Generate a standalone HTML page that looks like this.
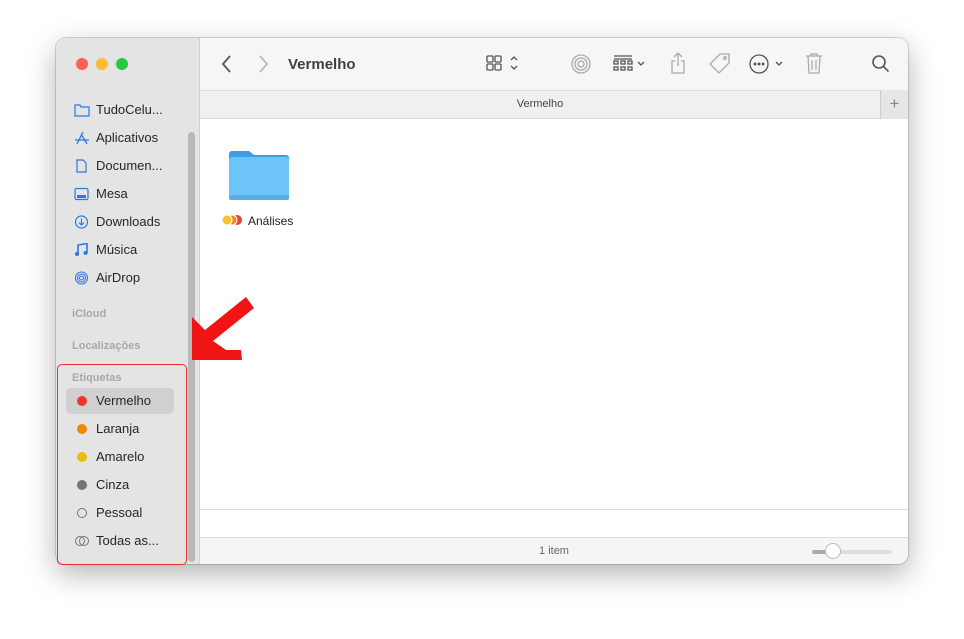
<!DOCTYPE html>
<html><head><meta charset="utf-8"><style>
*{margin:0;padding:0;box-sizing:border-box}
body{width:964px;height:639px;background:#fff;font-family:"Liberation Sans",sans-serif;position:relative;overflow:hidden}
.win{position:absolute;left:56px;top:38px;width:852px;height:526px;border-radius:10px;overflow:hidden;box-shadow:0 10px 30px rgba(0,0,0,.3),0 0 0 1px rgba(0,0,0,.15);background:#fff}
.side{position:absolute;left:0;top:0;width:144px;height:526px;background:#e4e4e4;border-right:1px solid #d0d0d0}
.tl{position:absolute;top:20px;width:12px;height:12px;border-radius:50%}
.it{position:absolute;left:16px;font-size:13px;color:#262626;height:20px;line-height:20px}
.it svg,.it .d{position:absolute;left:2px;top:3px}
.it span{position:absolute;left:24px;white-space:nowrap}
.hd{position:absolute;left:16px;font-size:11px;font-weight:bold;color:#a8a8a8}
.d{width:10px;height:10px;border-radius:50%;top:5px!important;left:5px!important}
.tb{position:absolute;left:144px;top:0;right:0;height:52px;background:#f6f6f6}
.tab{position:absolute;left:144px;top:52px;right:0;height:29px;background:#f0f0f0;border-top:1px solid #ddd;border-bottom:1px solid #ddd}
.ic{position:absolute;stroke:#8a8a8a;fill:none;stroke-width:1.3}
</style></head><body>
<div class="win">
<div class="side">
 <div class="tl" style="left:20px;background:#fe5f57"></div>
 <div class="tl" style="left:40px;background:#febc2e"></div>
 <div class="tl" style="left:60px;background:#28c840"></div>
 <div style="position:absolute;left:132px;top:94px;width:7px;height:430px;border-radius:4px;background:#b9b9b9"></div>
 <div class="it" style="top:62px"><svg width="16" height="14" viewBox="0 0 16 14"><path d="M1 2h5l1 2h8v9H1z" stroke="#2a7ae2" fill="none" stroke-width="1.2"/></svg><span>TudoCelu...</span></div>
 <div class="it" style="top:90px"><svg width="16" height="14" viewBox="0 0 16 14"><path d="M3 13L9 1M13 13L7 3M1 9h14" stroke="#2a7ae2" fill="none" stroke-width="1.3"/></svg><span>Aplicativos</span></div>
 <div class="it" style="top:118px"><svg width="16" height="14" viewBox="0 0 16 14"><path d="M3 1h6l3 3v9H3z" stroke="#2a7ae2" fill="none" stroke-width="1.2"/></svg><span>Documen...</span></div>
 <div class="it" style="top:146px"><svg width="16" height="14" viewBox="0 0 16 14"><rect x="1" y="1.5" width="13" height="11" rx="1.5" stroke="#2a7ae2" fill="none" stroke-width="1.2"/><rect x="3" y="8" width="9" height="3" fill="#2a7ae2"/></svg><span>Mesa</span></div>
 <div class="it" style="top:174px"><svg width="16" height="14" viewBox="0 0 16 14"><circle cx="7.5" cy="7" r="6" stroke="#2a7ae2" fill="none" stroke-width="1.2"/><path d="M7.5 3.5v6M5 7.5l2.5 2.5 2.5-2.5" stroke="#2a7ae2" fill="none" stroke-width="1.2"/></svg><span>Downloads</span></div>
 <div class="it" style="top:202px"><svg width="16" height="14" viewBox="0 0 16 14"><path d="M4 11V2l9-1.5V10" stroke="#2a7ae2" fill="none" stroke-width="1.6"/><circle cx="3" cy="11" r="2" fill="#2a7ae2"/><circle cx="11.5" cy="10" r="2" fill="#2a7ae2"/></svg><span>Música</span></div>
 <div class="it" style="top:230px"><svg width="16" height="14" viewBox="0 0 16 14"><g stroke="#2a7ae2" fill="none" stroke-width="1.1"><circle cx="7.5" cy="7" r="6"/><circle cx="7.5" cy="7" r="4"/><circle cx="7.5" cy="7" r="2"/></g></svg><span>AirDrop</span></div>
 <div class="hd" style="top:270px">iCloud</div>
 <div class="hd" style="top:302px">Localizações</div>
 <div class="hd" style="top:334px">Etiquetas</div>
 <div style="position:absolute;left:10px;top:350px;width:108px;height:26px;border-radius:5px;background:#d0d0d0"></div>
 <div class="it" style="top:353px"><div class="d" style="background:#f0352a"></div><span>Vermelho</span></div>
 <div class="it" style="top:381px"><div class="d" style="background:#f0870b"></div><span>Laranja</span></div>
 <div class="it" style="top:409px"><div class="d" style="background:#eabf0a"></div><span>Amarelo</span></div>
 <div class="it" style="top:437px"><div class="d" style="background:#747478"></div><span>Cinza</span></div>
 <div class="it" style="top:465px"><div class="d" style="border:1px solid #777"></div><span>Pessoal</span></div>
 <div class="it" style="top:493px"><svg width="16" height="14" viewBox="0 0 16 14"><circle cx="6" cy="7" r="4.5" stroke="#777" fill="none"/><circle cx="10" cy="7" r="4.5" stroke="#777" fill="none"/></svg><span>Todas as...</span></div>
</div>
<div class="tb">
 <svg class="ic" style="left:20px;top:16px;stroke:#555;stroke-width:1.8" width="14" height="20"><path d="M10 2L3 10l7 8"/></svg>
 <svg class="ic" style="left:56px;top:16px;stroke:#bbb;stroke-width:1.8" width="14" height="20"><path d="M4 2l7 8-7 8"/></svg>
 <div style="position:absolute;left:88px;top:18px;font-size:15px;font-weight:bold;color:#404040">Vermelho</div>
 <svg class="ic" style="left:286px;top:17px;stroke:#555" width="36" height="18"><rect x="1" y="1" width="6" height="6" rx="1"/><rect x="9" y="1" width="6" height="6" rx="1"/><rect x="1" y="9" width="6" height="6" rx="1"/><rect x="9" y="9" width="6" height="6" rx="1"/><path d="M25 5l3-3 3 3M25 11l3 3 3-3"/></svg>
 <svg class="ic" style="left:370px;top:15px;stroke:#aaa" width="22" height="22"><circle cx="11" cy="11" r="9"/><circle cx="11" cy="11" r="6"/><circle cx="11" cy="11" r="3"/></svg>
 <svg class="ic" style="left:413px;top:17px;stroke:#555" width="36" height="18"><path d="M1 1h18M1 4h18"/><rect x="1" y="6" width="4" height="3"/><rect x="8" y="6" width="4" height="3"/><rect x="15" y="6" width="4" height="3"/><rect x="1" y="12" width="4" height="3"/><rect x="8" y="12" width="4" height="3"/><rect x="15" y="12" width="4" height="3"/><path d="M25 7l3 3 3-3"/></svg>
 <svg class="ic" style="left:470px;top:13px;stroke:#aaa" width="16" height="24"><path d="M8 2v13M4 6l4-4 4 4M5 10H2v12h12V10h-3"/></svg>
 <svg class="ic" style="left:508px;top:14px;stroke:#aaa" width="24" height="24"><path d="M12 2h9v9L11 21 2 12z"/><circle cx="17" cy="6" r="1.3"/></svg>
 <svg class="ic" style="left:549px;top:15px;stroke:#555" width="40" height="22"><circle cx="10" cy="11" r="9"/><circle cx="6" cy="11" r=".8" fill="#555"/><circle cx="10" cy="11" r=".8" fill="#555"/><circle cx="14" cy="11" r=".8" fill="#555"/><path d="M27 9l3 3 3-3"/></svg>
 <svg class="ic" style="left:604px;top:14px;stroke:#aaa" width="20" height="24"><path d="M2 4h16M7 4V2h6v2M4 4l1 17h10l1-17M8 8v10M12 8v10"/></svg>
 <svg class="ic" style="left:671px;top:16px;stroke:#555;stroke-width:1.6" width="20" height="20"><circle cx="8" cy="8" r="6"/><path d="M12.5 12.5l5 5"/></svg>
</div>
<div class="tab"><div style="position:absolute;left:0;right:28px;text-align:center;top:7px;font-size:11px;color:#444">Vermelho</div>
<div style="position:absolute;right:0;top:-1px;width:28px;height:29px;border-left:1px solid #ccc;background:#e6e6e6;text-align:center;font-size:17px;color:#888;line-height:27px">+</div></div>
<svg style="position:absolute;left:172px;top:110px" width="62" height="54"><path d="M1 6a3 3 0 0 1 3-3h17l5 4h32a3 3 0 0 1 3 3v4H1z" fill="#3a9ee6"/><rect x="1" y="9" width="60" height="43" rx="3" fill="#6cc4f8"/><rect x="1" y="47" width="60" height="5" rx="2" fill="#56aee6"/></svg>
<svg style="position:absolute;left:165px;top:176px" width="22" height="12"><circle cx="16" cy="6" r="5" fill="#e9433a"/><circle cx="11" cy="6" r="5" fill="#f08a2e" stroke="#fff"/><circle cx="6" cy="6" r="5" fill="#f7c531" stroke="#fff"/></svg>
<div style="position:absolute;left:192px;top:176px;font-size:12px;color:#222">Análises</div>
<div style="position:absolute;left:144px;right:0;top:471px;border-top:1px solid #ddd"></div>
<div style="position:absolute;left:144px;right:0;top:499px;height:27px;background:#f5f5f5;border-top:1px solid #ddd">
 <div style="position:absolute;left:0;right:0;text-align:center;top:7px;font-size:11px;color:#666">1 item</div>
 <div style="position:absolute;left:612px;top:12px;width:80px;height:4px;border-radius:2px;background:#ddd"></div>
 <div style="position:absolute;left:612px;top:12px;width:20px;height:4px;border-radius:2px;background:#aaa"></div>
 <div style="position:absolute;left:625px;top:5px;width:16px;height:16px;border-radius:50%;background:#fff;border:1px solid #bbb"></div>
</div>
</div>
<div style="position:absolute;left:57px;top:364px;width:130px;height:201px;border:1.5px solid #e83030;border-radius:5px"></div>
<svg style="position:absolute;left:0;top:0" width="964" height="639"><polygon points="192,360 192,317 205,330 246,297 254,308 213,341 226,350 241,350 242,360" fill="#f01414"/></svg>
</body></html>
